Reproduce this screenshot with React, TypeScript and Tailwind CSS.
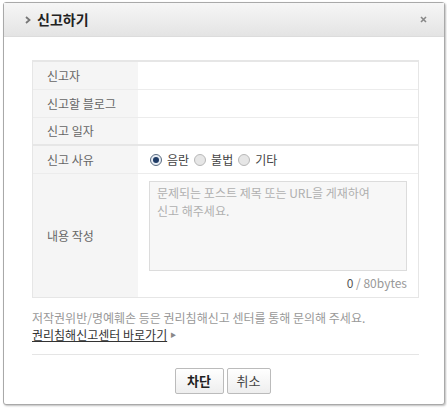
const font = { fontFamily: '"Noto Sans CJK KR", "Noto Sans", sans-serif' };

function Radio({ checked }: { checked?: boolean }) {
  return (
    <span
      className={
        'inline-flex h-[12px] w-[12px] items-center justify-center rounded-full border ' +
        (checked ? 'border-[#5a6b80] bg-[#e8eef5]' : 'border-[#b8b8b8] bg-[#e6e6e6]')
      }
    >
      {checked && <span className="h-[6px] w-[6px] rounded-full bg-[#1f3b66]" />}
    </span>
  );
}

function Row({ label, children, last }: { label: string; children?: React.ReactNode; last?: boolean }) {
  return (
    <div className={'flex h-[28px] ' + (last ? 'border-b-2 border-[#e6e6e6]' : 'border-b border-[#ececec]')}>
      <div className="flex w-[105px] items-center bg-[#f5f5f5] pl-[14px] text-[#666]">{label}</div>
      <div className="flex flex-1 items-center pl-[12px]">{children}</div>
    </div>
  );
}

export default function App() {
  return (
    <div className="h-[410px] w-[447px] bg-white pt-[2px] pl-[3px] text-[12px]" style={font}>
      <div className="h-[403px] w-[442px] rounded-[3px] border border-[#a9a9a9] bg-white shadow-[1px_1px_2px_rgba(0,0,0,0.25)]">
        {/* header */}
        <div className="flex h-[34px] items-center justify-between border-b border-[#dcdcdc] bg-gradient-to-b from-[#f6f6f6] to-[#e4e4e4] pl-[21px] pr-[17px]">
          <div className="flex items-center gap-[6px]">
            <svg width="6" height="8" viewBox="0 0 6 8">
              <path d="M1 1 L4.5 4 L1 7" fill="none" stroke="#777" strokeWidth="1.8" />
            </svg>
            <span className="text-[14px] font-bold text-[#222]">신고하기</span>
          </div>
          <svg width="7" height="7" viewBox="0 0 7 7">
            <path d="M1 1 L6 6 M6 1 L1 6" stroke="#888" strokeWidth="1.6" />
          </svg>
        </div>

        <div className="pl-[28px] pr-[25px] pt-[23px]">
          {/* table */}
          <div className="border-x border-[#e6e6e6] border-t-2">
            <Row label="신고자" />
            <Row label="신고할 블로그" />
            <Row label="신고 일자" last />
            <Row label="신고 사유">
              <div className="flex items-center gap-[3px] text-[#444]">
                <Radio checked />
                <span className="mr-[2px] ml-[2px]">음란</span>
                <Radio />
                <span className="mr-[2px] ml-[2px]">불법</span>
                <Radio />
                <span className="ml-[2px]">기타</span>
              </div>
            </Row>
            <div className="flex h-[124px] border-b border-[#e6e6e6]">
              <div className="flex w-[105px] items-center bg-[#f5f5f5] pl-[14px] text-[#666]">내용 작성</div>
              <div className="flex flex-1 flex-col pl-[11px] pr-[11px] pt-[7px]">
                <div className="h-[90px] border border-[#dcdcdc] bg-[#f7f7f7] px-[7px] pt-[2px] leading-[18px] text-[#b0b0b0]">
                  문제되는 포스트 제목 또는 URL을 게재하여
                  <br />
                  신고 해주세요.
                </div>
                <div className="mt-[3px] text-right text-[#999]">
                  <span className="text-[#555]">0</span> / 80bytes
                </div>
              </div>
            </div>
          </div>

          {/* notice */}
          <div className="mt-[12px] leading-[16px] text-[#999]">
            저작권위반/명예훼손 등은 권리침해신고 센터를 통해 문의해 주세요.
          </div>
          <div className="flex items-center gap-[3px] leading-[17px] text-[#333]">
            <span className="underline">권리침해신고센터 바로가기</span>
            <span className="text-[6px] text-[#888]">▶</span>
          </div>

          <div className="mt-[11px] border-t border-[#e5e5e5]" />

          {/* buttons */}
          <div className="mt-[13px] flex justify-center gap-[3px] pr-[6px]">
            <button className="h-[26px] w-[49px] rounded-[2px] border border-[#bbb] bg-gradient-to-b from-white to-[#eee] text-[13px] font-bold text-[#222]">
              차단
            </button>
            <button className="h-[26px] w-[44px] rounded-[2px] border border-[#bbb] bg-gradient-to-b from-white to-[#eee] text-[13px] text-[#444]">
              취소
            </button>
          </div>
        </div>
      </div>
    </div>
  );
}
